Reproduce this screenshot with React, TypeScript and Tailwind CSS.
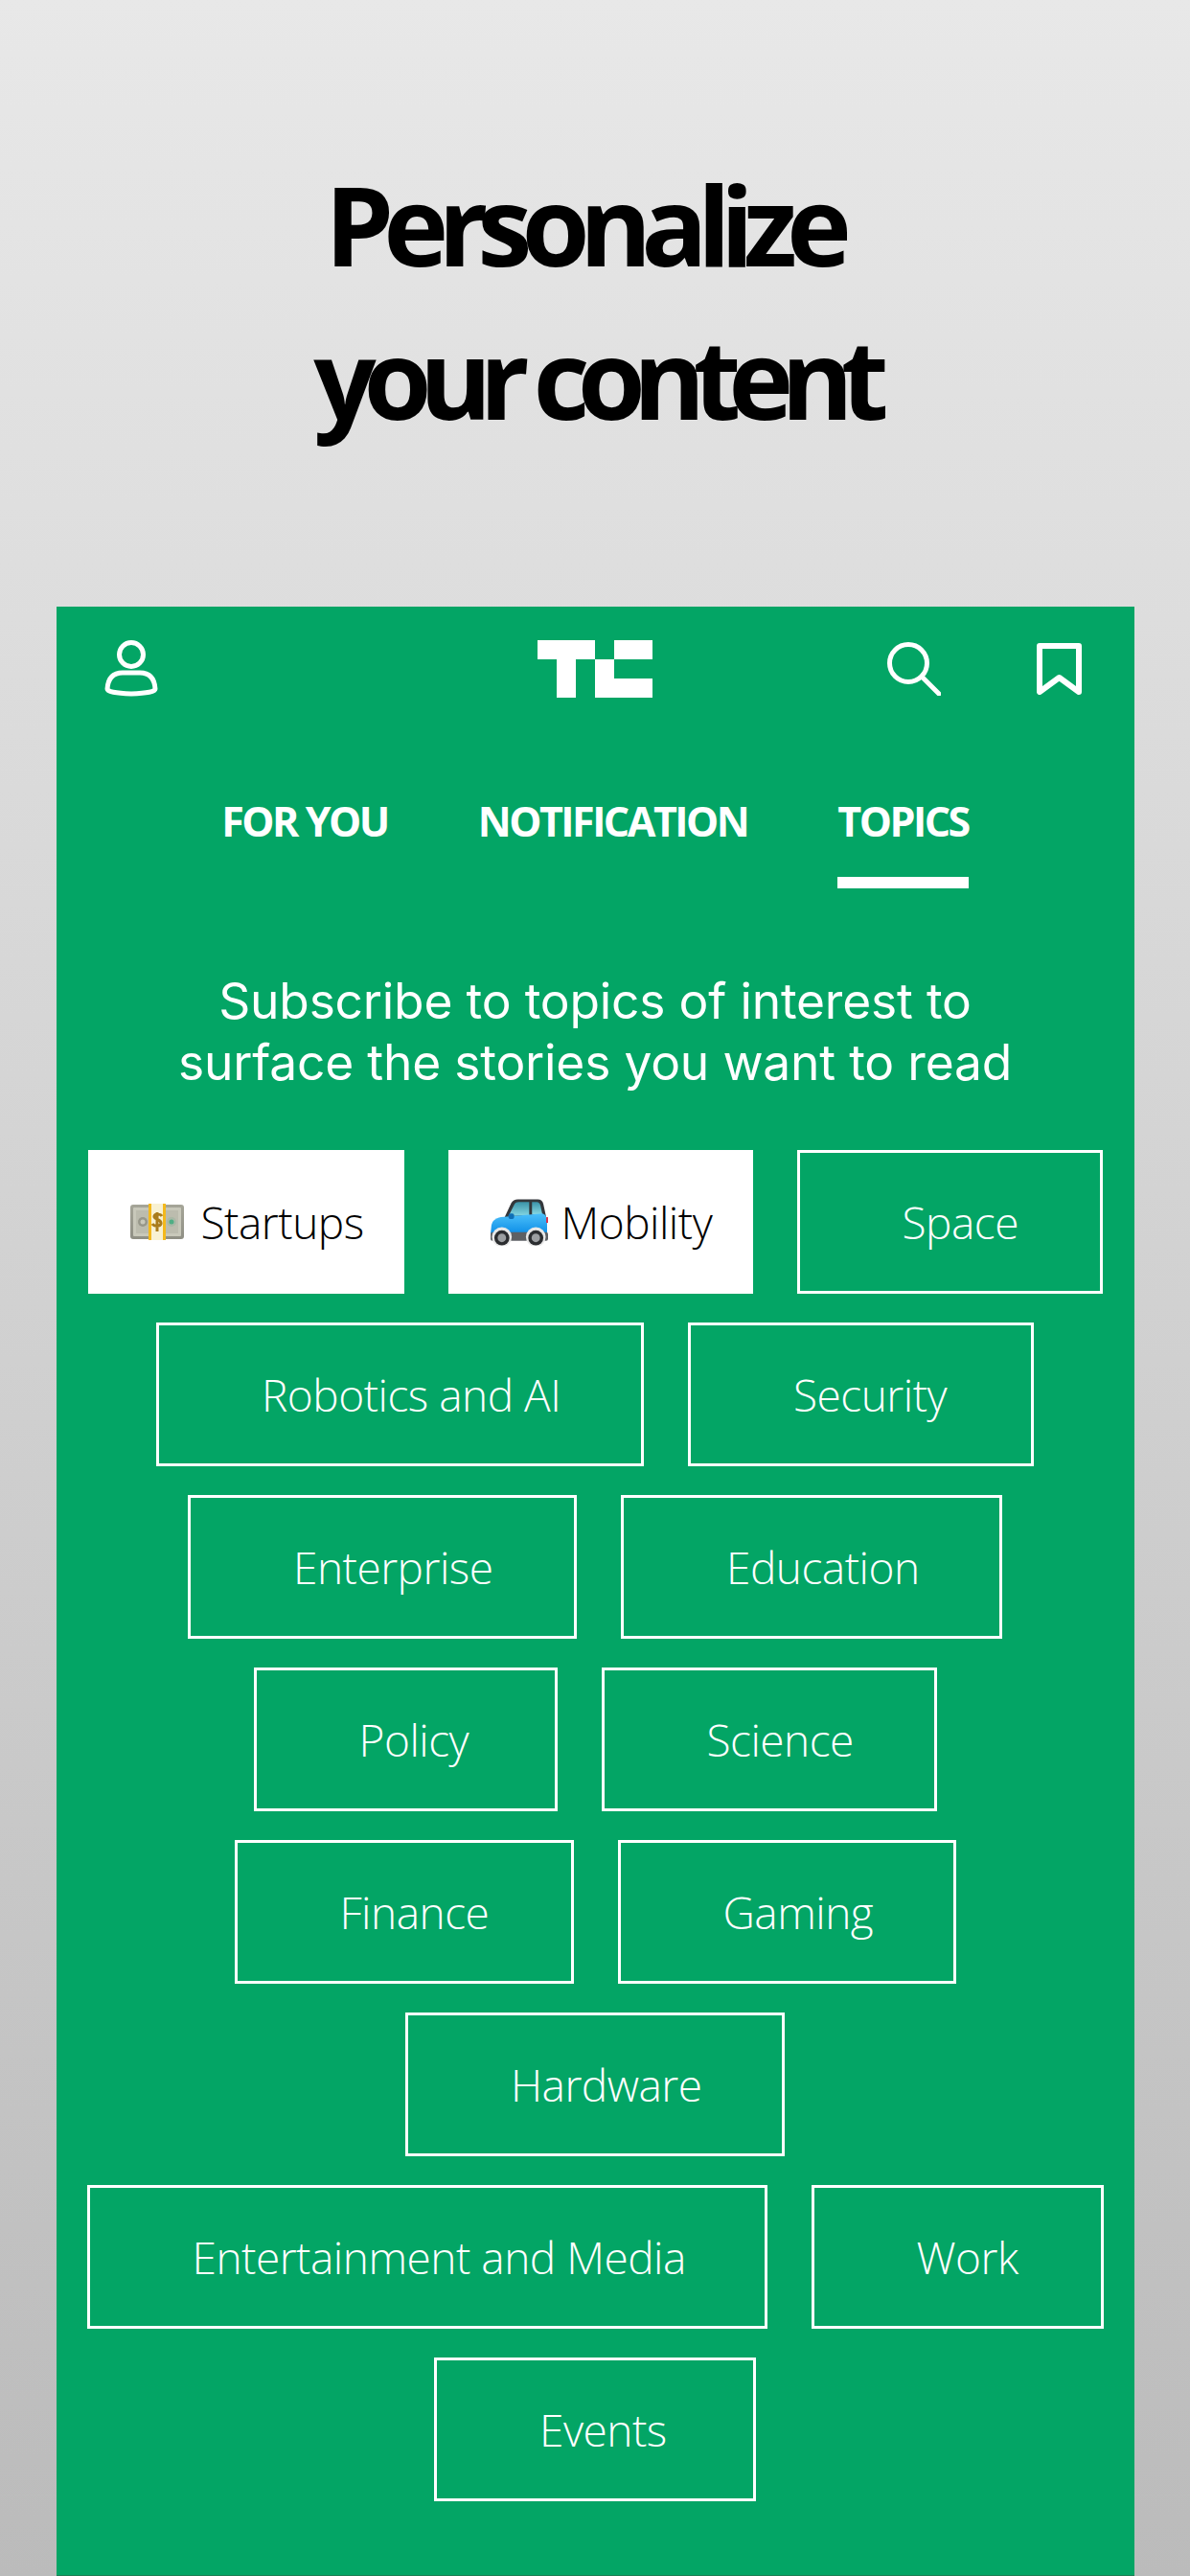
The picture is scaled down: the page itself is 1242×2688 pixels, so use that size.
import React from 'react'

interface Topic {
  label:     string
  width:     string
  selected?: boolean
  emoji?:    React.ReactNode
}

function CashEmoji() {
  return (
    <svg width="56" height="38" viewBox="0 0 56 38" className="block">
      <defs>
        <linearGradient id="bill" x1="0" y1="0" x2="0" y2="1">
          <stop offset="0" stopColor="#a5a598" />
          <stop offset="1" stopColor="#8f8f84" />
        </linearGradient>
      </defs>
      <rect x="0" y="1" width="56" height="36" rx="3" fill="url(#bill)" />
      <rect x="3" y="4" width="50" height="30" rx="1" fill="#c8c8ba" />
      <rect x="6" y="7" width="44" height="24" fill="#bcbcae" />
      <circle cx="13" cy="19" r="5" fill="#97978a" />
      <circle cx="13" cy="19" r="2.5" fill="#c8c8ba" />
      <circle cx="43" cy="19" r="5" fill="#a9b8a6" />
      <circle cx="43" cy="19" r="2.500" fill="#4fae84" />
      <rect x="19" y="0" width="18" height="38" fill="#f8f1d2" />
      <rect x="19" y="0" width="3" height="38" fill="#f4b91c" />
      <rect x="34" y="0" width="3" height="38" fill="#f4b91c" />
      <path d="M33 13c-1-2-7-3-8 0-1 4 8 3 7 8-1 3-7 3-9 0M28 9v20" fill="none" stroke="#a97c1c" strokeWidth="3" />
    </svg>
  )
}

function CarEmoji() {
  return (
    <svg width="61" height="50" viewBox="0 0 61 50" className="block">
      <defs>
        <linearGradient id="carBody" x1="0" y1="0" x2="0" y2="1">
          <stop offset="0" stopColor="#4cc0fa" />
          <stop offset="1" stopColor="#0c8de6" />
        </linearGradient>
        <linearGradient id="carGlass" x1="0" y1="0" x2="0" y2="1">
          <stop offset="0" stopColor="#3b93a8" />
          <stop offset="1" stopColor="#86d8e4" />
        </linearGradient>
      </defs>
      <path d="M15 20 22 5Q24 1 29 1H50Q55 1 56 6L59 20Z" fill="#33373b" />
      <path d="M19 19 25 7Q26 4 30 4H41V18Z" fill="url(#carGlass)" />
      <path d="M44 4H49Q52 4 53 8L55 17H44Z" fill="url(#carGlass)" />
      <path d="M1 28Q2 22 11 20L55 16Q60 17 60 26V38H0Z" fill="url(#carBody)" />
      <rect x="19" y="16" width="6" height="6" rx="2" fill="#0f6fb5" />
      <rect x="59" y="20" width="2" height="6" fill="#d8344a" />
      <rect x="0" y="36" width="61" height="9" rx="2" fill="#5d6064" />
      <circle cx="12" cy="41" r="10.500" fill="#e8e8e8" />
      <circle cx="48" cy="41" r="10.500" fill="#e8e8e8" />
      <circle cx="12" cy="42" r="8" fill="#2b2d30" />
      <circle cx="12" cy="42" r="4.500" fill="#9b9ea1" />
      <circle cx="48" cy="42" r="8" fill="#2b2d30" />
      <circle cx="48" cy="42" r="4.500" fill="#9b9ea1" />
    </svg>
  )
}

const topics: Topic[] = [
  { label: 'Startups', width: 'w-[330px]', selected: true, emoji: <CashEmoji /> },
  { label: 'Mobility', width: 'w-[318px]', selected: true, emoji: <CarEmoji /> },
  { label: 'Space', width: 'w-[319px]' },
  { label: 'Robotics and AI', width: 'w-[509px]' },
  { label: 'Security', width: 'w-[361px]' },
  { label: 'Enterprise', width: 'w-[406px]' },
  { label: 'Education', width: 'w-[398px]' },
  { label: 'Policy', width: 'w-[317px]' },
  { label: 'Science', width: 'w-[350px]' },
  { label: 'Finance', width: 'w-[354px]' },
  { label: 'Gaming', width: 'w-[353px]' },
  { label: 'Hardware', width: 'w-[396px]' },
  { label: 'Entertainment and Media', width: 'w-[710px]' },
  { label: 'Work', width: 'w-[305px]' },
  { label: 'Events', width: 'w-[336px]' },
]

function TopicTile({ label, width, selected, emoji }: Topic) {
  if (selected) {
    return (
      <div className={`flex h-[150px] items-center bg-white pl-[44px] text-black ${width}`}>
        <div className="mr-[14px] flex w-[60px] shrink-0 items-center">{emoji}</div>
        <span>{label}</span>
      </div>
    )
  }
  return (
    <div className={`flex h-[150px] items-center border-[3px] border-white pl-[107px] text-white ${width}`}>
      <span className="whitespace-nowrap">{label}</span>
    </div>
  )
}

export default function App() {
  return (
    <div className="flex h-[2688px] w-[1242px] flex-col items-center overflow-hidden bg-linear-to-b from-[#e8e8e8] to-[#bbbbbb]">
      <h1 className="mt-[154px] text-center font-['Open_Sans',sans-serif] text-[115px] leading-[160px] font-bold tracking-[-13px] text-black">
        <span className="inline-block pr-[25px] tracking-[-11px]">Personalize</span>
        <br />
        your content
      </h1>

      <div className="mt-[159px] flex h-[2055px] w-[1125px] flex-col border-b border-[#1f7f55] bg-[#03a565]">
        <div className="mt-[34px] grid grid-cols-[1fr_auto_1fr] items-center">
          <div className="pl-[50px]">
            <svg width="56" height="62" viewBox="0 0 56 62" fill="none" stroke="white" strokeWidth="5" className="block">
              <circle cx="28" cy="16" r="12.5" />
              <path d="M3 52Q4 35 19 35H37Q52 35 53 52Q53 56 28 57Q3 56 3 52Z" strokeLinejoin="round" />
            </svg>
          </div>
          <svg width="120" height="60" viewBox="0 0 120 60" fill="white" className="block">
            <path d="M0 0H60V20H40V60H20V20H0Z" />
            <path d="M60 20H80V40H120V60H60Z" />
            <path d="M80 0H120V20H80Z" />
          </svg>
          <div className="flex items-center justify-end gap-[100px] pr-[55px]">
            <svg width="56" height="56" viewBox="0 0 56 56" fill="none" stroke="white" strokeWidth="5" strokeLinecap="round" className="block">
              <circle cx="22" cy="22" r="19.5" />
              <path d="M36 36 54 54" />
            </svg>
            <svg width="47" height="54" viewBox="0 0 47 54" fill="none" stroke="white" strokeWidth="6" strokeLinejoin="round" className="block">
              <path d="M3 3H44V51L23.500 36 3 51Z" />
            </svg>
          </div>
        </div>

        <div className="mt-[98px] flex justify-center gap-[94px] font-['Open_Sans',sans-serif] text-[43px] leading-[60px] font-bold tracking-[-2.5px] text-white">
          <div>FOR YOU</div>
          <div>NOTIFICATION</div>
          <div className="flex flex-col">
            <span>TOPICS</span>
            <span className="mt-[28px] h-[12px] w-full bg-white" />
          </div>
        </div>

        <p className="mt-[85px] text-center font-['Inter',sans-serif] text-[51.5px] leading-[64px] tracking-[-0.2px] text-white">
          Subscribe to topics of interest to
          <br />
          surface the stories you want to read
        </p>

        <div className="mt-[60px] flex w-[1064px] flex-wrap justify-center gap-x-[46px] gap-y-[30px] self-center font-['Open_Sans',sans-serif] text-[46px] leading-[60px] font-light tracking-[-0.5px]">
          {topics.map(topic => (
            <TopicTile key={topic.label} {...topic} />
          ))}
        </div>
      </div>
    </div>
  )
}
